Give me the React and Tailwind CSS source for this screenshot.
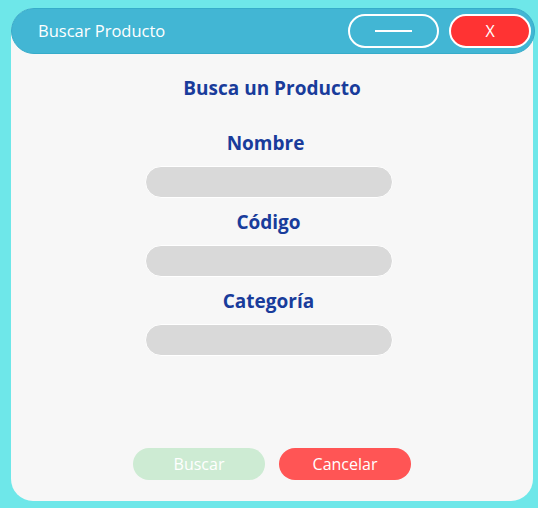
export default function App() {
  const fields = [
    { label: "Nombre", cls: "mr-[6px]" },
    { label: "Código", cls: "" },
    { label: "Categoría", cls: "" },
  ];

  return (
    <div
      className="w-[538px] h-[508px] bg-[#6ee7e9] pt-[8px] pl-[11px]"
      style={{ fontFamily: '"Open Sans", "Noto Sans", sans-serif' }}
    >
      <div className="w-[522px] h-[493px] bg-[#f7f7f7] rounded-t-[24px] rounded-b-[22px] flex flex-col">
        {/* title bar */}
        <div className="h-[46px] w-[524px] rounded-full bg-[#42b6d4] border border-[#36acca] flex items-center pl-[26px] pr-[3px]">
          <span className="text-white text-[16.5px] flex-1">Buscar Producto</span>
          <button className="w-[91px] h-[34px] rounded-full border-2 border-white flex items-center justify-center">
            <span className="block w-[37px] h-[2px] bg-white" />
          </button>
          <button className="ml-[10px] w-[82px] h-[34px] rounded-full border-2 border-white bg-[#ff3333] text-white text-[16px] flex items-center justify-center">
            X
          </button>
        </div>

        {/* form */}
        <div className="flex flex-col items-center pt-[21px]">
          <h2 className="text-[19px] font-bold text-[#193c9b] leading-[26px]">
            Busca un Producto
          </h2>
          <div className="flex flex-col items-center mt-[28px] gap-[10px] mr-[7px]">
            {fields.map((f) => (
              <div key={f.label} className="flex flex-col items-center gap-[9px]">
                <label className={`text-[19px] font-bold text-[#193c9b] leading-[28px] ${f.cls}`}>
                  {f.label}
                </label>
                <input
                  className="w-[248px] h-[32px] rounded-full bg-[#d9d9d9] border border-white outline-none"
                  type="text"
                />
              </div>
            ))}
          </div>
        </div>

        {/* actions */}
        <div className="mt-auto mb-[21px] flex justify-center gap-[14px]">
          <button className="w-[132px] h-[32px] rounded-full bg-[#cdebd3] text-white text-[16px]">
            Buscar
          </button>
          <button className="w-[132px] h-[32px] rounded-full bg-[#ff5555] text-white text-[16px]">
            Cancelar
          </button>
        </div>
      </div>
    </div>
  );
}
